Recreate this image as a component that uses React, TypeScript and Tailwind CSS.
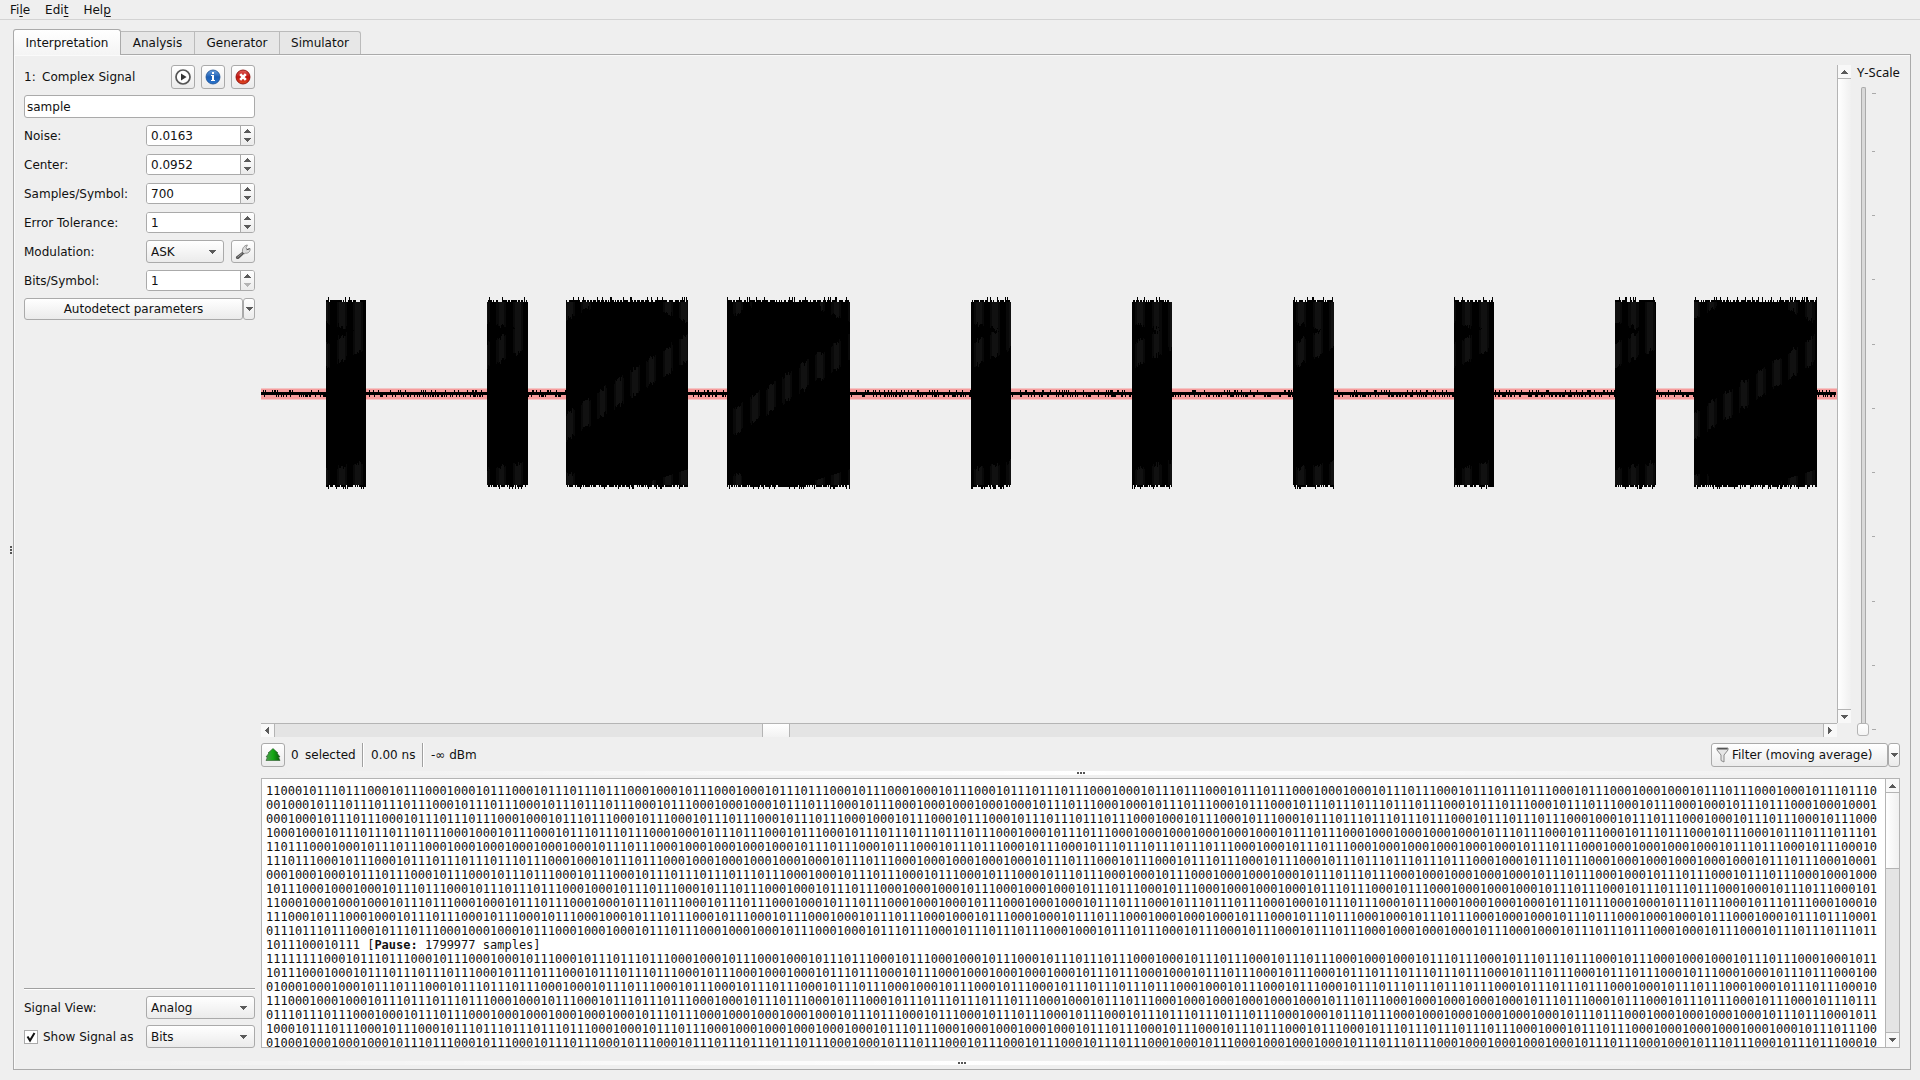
import React from "react";

/* ---------- demodulated data ---------- */

const SYMBOLS = [
  "0110100101110010011010010111001101100011011101000110011",
  "00111101101110100011010000011001101011111011011010011000",
  "0011011100110101101100101011110010101111101110011001101",
  "00011110010111001101011111001100000011000001101011010111",
  "11001100000011000001101011010111110011000000110000011010",
  "11010111110011000000110000011010110101111100110000001100",
  "0001101011010111110011010101100100001110000011001101100",
  "01000110111001101100110001000110100001101000011011100110",
  "10000110011001101100110001000110111001101000011001101100",
  "10100110101001101010011001001100001011001100011000100110",
  "1110110001000110001001101110011010101100001001110010111",
  "1101",
].join("");

const expand = (symbols: string) =>
  symbols
    .split("")
    .map((s) => (s === "1" ? "0111" : "0001"))
    .join("");

const MESSAGE = "11" + expand(SYMBOLS);

/* ---------- waveform ---------- */

const PLOT_W = 1576;
const PLOT_H = 658;
const MID = 328;

const BURSTS: [number, number][] = [
  [65, 105],
  [226, 267],
  [305, 427],
  [466, 589],
  [710, 750],
  [871, 911],
  [1032, 1073],
  [1193, 1233],
  [1354, 1395],
  [1433, 1556],
];

function makeRandom(seed: number) {
  let s = seed;
  return () => {
    s = (s * 1664525 + 1013904223) % 4294967296;
    return s / 4294967296;
  };
}

function buildWave() {
  const rnd = makeRandom(7);
  let noise = "";
  for (let x = 0; x < PLOT_W - 1; x += 1) {
    if (rnd() < 0.18) noise += `M${x} ${MID}v-3h1v3z`;
    if (rnd() < 0.34) noise += `M${x} ${MID}v4h1v-4z`;
  }
  let body = "";
  const sheen = ["", ""];
  for (const [a, b] of BURSTS) {
    const phase = rnd() * 6;
    let jitter = 0;
    for (let x = a; x < b; x += 1) {
      const up = rnd();
      const down = rnd();
      const top = MID - 93 - (up > 0.88 ? 3 : up > 0.3 ? 0 : -2);
      const bottom = MID + 94 + (down > 0.88 ? 2 : down > 0.3 ? 0 : -2);
      body += `M${x} ${top}h1V${bottom}h-1z`;
      const t = (x - a) / (b - a);
      const light = Math.sin(x / 2.6 + phase);
      if (light < -0.35) continue;
      const tone = light > 0.45 ? 1 : 0;
      jitter = Math.round(rnd() * 5);
      const bar = (y: number, h: number) => {
        sheen[tone] += `M${x} ${Math.round(y)}h1v${Math.round(h)}h-1z`;
      };
      if (b - a > 60) {
        bar(MID + 18 - t * 80 + jitter, 26);
        if (t < 0.2) bar(MID - 91, 14 - t * 60 + jitter);
        if (t > 0.75) bar(MID - 91, (t - 0.7) * 60 + jitter);
        if (t < 0.12) bar(MID + 84 - jitter, 8 + jitter);
        if (t > 0.7) bar(MID + 92 - (t - 0.6) * 40, (t - 0.6) * 40);
      } else {
        bar(MID - 52 - t * 20 + jitter, 24);
        bar(MID - 91, 18 + t * 10 + jitter);
        bar(MID + 74 - t * 8 + jitter, 18 + t * 8 - jitter);
      }
    }
  }
  return { noise, body, sheen };
}

const WAVE = buildWave();

function Waveform() {
  return (
    <svg
      className="block min-h-0 w-full flex-1"
      viewBox={`0 0 ${PLOT_W} ${PLOT_H}`}
      preserveAspectRatio="none"
      shapeRendering="crispEdges"
      role="img"
      aria-label="Signal waveform"
    >
      <rect x="0" y={MID - 5} width={PLOT_W} height="12" fill="#f3c4c4" />
      <rect x="0" y={MID - 4} width={PLOT_W} height="10" fill="#f69c9c" />
      <rect x="0" y={MID - 1} width={PLOT_W - 1} height="3" fill="#000" />
      <path d={WAVE.noise} fill="#000" />
      <path d={WAVE.body} fill="#000" />
      <path d={WAVE.sheen[0]} fill="#090909" />
      <path d={WAVE.sheen[1]} fill="#111" />
    </svg>
  );
}

/* ---------- small drawings ---------- */

type Dir = "up" | "down" | "left" | "right";

const ARROW_PATHS: Record<Dir, string> = {
  up: "M0 4h7v-1h-1v-1h-1v-1h-1v-1h-1v1h-1v1h-1v1h-1z",
  down: "M0 0h7v1h-1v1h-1v1h-1v1h-1v-1h-1v-1h-1v-1h-1z",
  left: "M4 0v7h-1v-1h-1v-1h-1v-1h-1v-1h1v-1h1v-1h1v-1z",
  right: "M0 0v7h1v-1h1v-1h1v-1h1v-1h-1v-1h-1v-1h-1v-1z",
};

function Arrow({ dir, faded = false }: { dir: Dir; faded?: boolean }) {
  const flat = dir === "up" || dir === "down";
  return (
    <svg
      width={flat ? 7 : 4}
      height={flat ? 4 : 7}
      viewBox={flat ? "0 0 7 4" : "0 0 4 7"}
      className="block shrink-0"
      aria-hidden="true"
    >
      <path d={ARROW_PATHS[dir]} fill={faded ? "#b4b4b4" : "#5a5a5a"} />
    </svg>
  );
}

function PlayIcon() {
  return (
    <svg width="16" height="16" viewBox="0 0 16 16" aria-hidden="true">
      <circle cx="8" cy="8" r="7" fill="#fff" stroke="#555" strokeWidth="1.7" />
      <path d="M6 4.6v6.8L11.600 8z" fill="#333" />
    </svg>
  );
}

function InfoIcon() {
  return (
    <svg width="16" height="16" viewBox="0 0 16 16" aria-hidden="true">
      <defs>
        <linearGradient id="infoFill" x1="0" y1="0" x2="0" y2="1">
          <stop offset="0" stopColor="#6ba0de" />
          <stop offset="0.5" stopColor="#1d5fb4" />
          <stop offset="1" stopColor="#2a74cc" />
        </linearGradient>
      </defs>
      <circle cx="8" cy="8" r="7" fill="url(#infoFill)" stroke="#1b4f93" strokeWidth="0.8" />
      <path d="M7 3h2v2H7zM6 6h3v5h1v1H6v-1h1V7H6z" fill="#fff" />
    </svg>
  );
}

function CloseIcon() {
  return (
    <svg width="16" height="16" viewBox="0 0 16 16" aria-hidden="true">
      <defs>
        <linearGradient id="closeFill" x1="0" y1="0" x2="0" y2="1">
          <stop offset="0" stopColor="#e0605a" />
          <stop offset="0.5" stopColor="#c01410" />
          <stop offset="1" stopColor="#e04a20" />
        </linearGradient>
      </defs>
      <circle cx="8" cy="8" r="7" fill="url(#closeFill)" stroke="#8f0e0a" strokeWidth="0.9" />
      <path d="M5.200 5.200l5.600 5.600M10.800 5.200l-5.600 5.600" stroke="#fff" strokeWidth="2.6" />
    </svg>
  );
}

function WrenchIcon() {
  return (
    <svg width="16" height="16" viewBox="0 0 16 16" aria-hidden="true">
      <path
        d="M7.600 8.600C6.800 5 8.600 1.600 12.400 1L11 3.800l1 1.600L15 4.400c.6 2.800-1.600 5.200-4.600 4.800L9 10z"
        fill="#dcdcdc"
        stroke="#8a8a8a"
        strokeWidth="0.9"
      />
      <path d="M11.600 5.800l3-1" stroke="#555" strokeWidth="1" />
      <path d="M1.200 12.600L7.400 7.800l1.800 2-5.400 5c-1.600 1-3.800-.8-2.600-2.200z" fill="#555" />
      <path d="M2.400 13.400l5-4.200" stroke="#aaa" strokeWidth="0.8" />
    </svg>
  );
}

function TreeIcon() {
  return (
    <svg width="16" height="16" viewBox="0 0 16 16" aria-hidden="true">
      <defs>
        <linearGradient id="treeFill" x1="0" y1="0" x2="1" y2="0">
          <stop offset="0" stopColor="#4f9a4f" />
          <stop offset="0.5" stopColor="#12a812" />
          <stop offset="1" stopColor="#0a5c0a" />
        </linearGradient>
      </defs>
      <path
        d="M8 1.500l5 4.500h-1l3 4h-1.500l1.500 3.500H1L2.500 10H1l3-4H3z"
        fill="url(#treeFill)"
        stroke="#2a5a2a"
        strokeWidth="0.6"
      />
    </svg>
  );
}

function FunnelIcon() {
  return (
    <svg width="13" height="16" viewBox="0 0 13 16" aria-hidden="true">
      <path d="M1 1h11v2L8 8v7l-3-1.500V8L1 3z" fill="#e6e6e6" stroke="#8a8a8a" strokeWidth="1" />
      <path d="M1.500 1h10v1.500h-10z" fill="#555" />
    </svg>
  );
}

function Dots({ vertical = false }: { vertical?: boolean }) {
  return (
    <span className={vertical ? "flex flex-col gap-px" : "flex gap-px"} aria-hidden="true">
      <span className="size-[2px] bg-[#555]" />
      <span className="size-[2px] bg-[#555]" />
      <span className="size-[2px] bg-[#555]" />
    </span>
  );
}

function SplitHandle() {
  return (
    <div className="flex h-1 w-full items-center justify-center bg-linear-to-r from-transparent via-white to-transparent">
      <Dots />
    </div>
  );
}

/* ---------- controls ---------- */

const FACE = "rounded-[3px] border border-[#aaa] bg-linear-to-b from-white to-[#ebebeb]";

function IconButton({ label, children }: { label: string; children: React.ReactNode }) {
  return (
    <button
      type="button"
      aria-label={label}
      className={`${FACE} flex h-full w-6 shrink-0 items-center justify-center`}
    >
      {children}
    </button>
  );
}

function Spin({ id, label, value, atMin = false }: { id: string; label: string; value: string; atMin?: boolean }) {
  return (
    <div className="flex h-[23px] items-center">
      <label htmlFor={id} className="w-[122px] shrink-0">
        {label}
      </label>
      <div className="flex h-[21px] min-w-0 flex-1 overflow-hidden rounded-[3px] border border-[#aaa] bg-white">
        <input id={id} defaultValue={value} className="min-w-0 flex-1 bg-white pl-1 outline-none" />
        <div className="flex w-[14px] shrink-0 flex-col border-l border-[#aaa] bg-linear-to-b from-white to-[#ebebeb]">
          <button type="button" aria-label={`Increase ${label}`} className="flex flex-1 items-center justify-center">
            <Arrow dir="up" />
          </button>
          <button type="button" aria-label={`Decrease ${label}`} className="flex flex-1 items-center justify-center">
            <Arrow dir="down" faded={atMin} />
          </button>
        </div>
      </div>
    </div>
  );
}

function Select({ id, value, options, label }: { id: string; value: string; options: string[]; label?: string }) {
  return (
    <div className="relative h-[23px] min-w-0 flex-1">
      <select
        id={id}
        aria-label={label}
        defaultValue={value}
        className={`${FACE} h-full w-full appearance-none pl-1 outline-none`}
      >
        {options.map((o) => (
          <option key={o}>{o}</option>
        ))}
      </select>
      <span className="pointer-events-none absolute inset-y-0 right-2 flex items-center">
        <Arrow dir="down" />
      </span>
    </div>
  );
}

function Mnemonic({ before, mark, after }: { before: string; mark: string; after: string }) {
  return (
    <button type="button" className="whitespace-pre">
      {before}
      <span className="underline underline-offset-2">{mark}</span>
      {after}
    </button>
  );
}

function Sidebar() {
  return (
    <aside className="flex w-[231px] shrink-0 flex-col gap-[6px]">
      <div className="flex h-6 items-center">
        <span className="w-[18px]">1:</span>
        <span className="flex-1">Complex Signal</span>
        <div className="flex h-full gap-[6px]">
          <IconButton label="Replay signal">
            <PlayIcon />
          </IconButton>
          <IconButton label="Signal details">
            <InfoIcon />
          </IconButton>
          <IconButton label="Close signal">
            <CloseIcon />
          </IconButton>
        </div>
      </div>
      <input
        aria-label="Signal name"
        defaultValue="sample"
        className="h-[23px] w-full rounded-[3px] border border-[#aaa] bg-white px-[2px] outline-none"
      />
      <Spin id="noise" label="Noise:" value="0.0163" />
      <Spin id="center" label="Center:" value="0.0952" />
      <Spin id="samples" label="Samples/Symbol:" value="700" />
      <Spin id="tolerance" label="Error Tolerance:" value="1" />
      <div className="flex h-[23px] items-center">
        <label htmlFor="modulation" className="w-[122px] shrink-0">
          Modulation:
        </label>
        <Select id="modulation" value="ASK" options={["ASK", "FSK", "PSK"]} />
        <span className="w-[7px]" />
        <IconButton label="Modulation settings">
          <WrenchIcon />
        </IconButton>
      </div>
      <Spin id="bits" label="Bits/Symbol:" value="1" atMin />
      <div className="flex h-[22px]">
        <button type="button" className={`${FACE} flex-1`}>
          Autodetect parameters
        </button>
        <button
          type="button"
          aria-label="Autodetect options"
          className={`${FACE} flex w-3 items-center justify-center`}
        >
          <Arrow dir="down" />
        </button>
      </div>
      <div className="flex-1" />
      <hr className="h-[2px] border-t border-b border-t-[#a0a0a0] border-b-white" />
      <div className="flex h-[23px] items-center">
        <label htmlFor="view" className="w-[122px] shrink-0">
          Signal View:
        </label>
        <Select id="view" value="Analog" options={["Analog", "Demodulated", "Spectrogram"]} />
      </div>
      <div className="flex h-[23px] items-center">
        <label className="flex w-[122px] shrink-0 items-center gap-[5px]">
          <span className="relative flex size-[14px]">
            <input
              type="checkbox"
              defaultChecked
              className="size-[14px] appearance-none border border-[#aaa] bg-white"
            />
            <svg
              width="14"
              height="14"
              viewBox="0 0 14 14"
              className="pointer-events-none absolute inset-0"
              aria-hidden="true"
            >
              <path d="M3.500 6.500L6 10.500L10.500 3" fill="none" stroke="#111" strokeWidth="2" />
            </svg>
          </span>
          Show Signal as
        </label>
        <Select id="show" label="Show signal as" value="Bits" options={["Bits", "Hex", "ASCII"]} />
      </div>
    </aside>
  );
}

function YScale() {
  return (
    <div className="mb-px flex w-[43px] shrink-0 flex-col">
      <label htmlFor="yscale" className="h-[14px] font-['Noto_Sans'] text-[13px] leading-[14px] whitespace-nowrap">
        Y-Scale
      </label>
      <div className="relative mt-2 flex flex-1">
        <input id="yscale" type="range" min="1" max="100" defaultValue="1" className="absolute inset-0 w-full opacity-0" />
        <div className="pointer-events-none flex w-3 flex-col items-center">
          <div className="w-[5px] flex-1 rounded-t-[2px] border border-b-0 border-[#aaa] bg-[#d9d9d9]" />
          <div className="h-[13px] w-3 rounded-[3px] border border-[#b4b4b4] bg-linear-to-b from-white to-[#f4f4f4]" />
        </div>
        <div className="pointer-events-none ml-[3px] flex flex-col pt-[6px] pb-[6px]">
          <div className="h-px w-1 bg-[#aaa]" />
          <div className="h-[57px]" />
          <div className="flex flex-1 flex-col justify-between">
            {Array.from({ length: 10 }, (_, i) => (
              <div key={i} className={i === 9 ? "h-px w-1 bg-[#aaa]" : "h-px w-[3px] bg-[#aaa]"} />
            ))}
          </div>
        </div>
      </div>
    </div>
  );
}

function ScrollButton({ dir, className }: { dir: Dir; className: string }) {
  return (
    <button
      type="button"
      aria-label={`Scroll ${dir}`}
      className={`flex shrink-0 items-center justify-center border-[#b4b4b4] bg-[#f8f8f8] ${className}`}
    >
      <Arrow dir={dir} />
    </button>
  );
}

function GraphPanel() {
  return (
    <div className="flex min-h-0 flex-1 gap-[6px]">
      <div className="flex min-w-0 flex-1">
        <div className="flex min-w-0 flex-1 flex-col">
          <Waveform />
          <div className="flex h-[14px] shrink-0 border-t border-[#b4b4b4] bg-[#e4e4e4]">
            <ScrollButton dir="left" className="w-[14px] border-r pr-px" />
            <div className="w-[487px]" />
            <div className="w-7 border-x border-[#b4b4b4] bg-linear-to-b from-white to-[#f2f2f2]" />
            <div className="flex-1" />
            <ScrollButton dir="right" className="w-[14px] border-l pr-px" />
          </div>
        </div>
        <div className="mb-[14px] flex w-[14px] shrink-0 flex-col border-l border-[#b4b4b4] bg-linear-to-r from-white to-[#f0f0f0]">
          <ScrollButton dir="up" className="h-[14px] border-b" />
          <div className="flex-1" />
          <ScrollButton dir="down" className="h-[14px] border-t" />
        </div>
      </div>
      <YScale />
    </div>
  );
}

function Divider() {
  return <span className="h-full w-[2px] border-r border-l border-r-white border-l-[#a0a0a0]" />;
}

function InfoBar() {
  return (
    <div className="mt-[6px] flex h-6 shrink-0 items-center whitespace-pre">
      <IconButton label="Collapse controls">
        <TreeIcon />
      </IconButton>
      <span className="ml-[6px] w-[14px]">0</span>
      <span className="w-[57px]">selected</span>
      <Divider />
      <span className="ml-[7px] w-[51px]">0.00 ns</span>
      <Divider />
      <span className="ml-[7px]">-∞ dBm</span>
      <span className="flex-1" />
      <button type="button" className={`${FACE} flex h-full w-[177px] items-center gap-[3px] pl-1`}>
        <FunnelIcon />
        Filter (moving average)
      </button>
      <button
        type="button"
        aria-label="Filter options"
        className={`${FACE} flex h-full w-3 items-center justify-center`}
      >
        <Arrow dir="down" />
      </button>
    </div>
  );
}

function BitView() {
  return (
    <div className="flex h-[270px] shrink-0 border border-[#b4b4b4] bg-white">
      <div
        role="textbox"
        aria-multiline="true"
        aria-readonly="true"
        aria-label="Demodulated bits"
        className="min-w-0 flex-1 overflow-hidden px-1 pt-[5px] font-['DejaVu_Sans_Mono',monospace] text-[12px] leading-[14px] break-all"
      >
        <p>
          {MESSAGE} [<b>Pause:</b> 1799977 samples]
        </p>
        <p>{"111111" + MESSAGE}</p>
      </div>
      <div className="flex w-[14px] shrink-0 flex-col border-l border-[#b4b4b4] bg-[#e4e4e4]">
        <ScrollButton dir="up" className="h-[14px] border-b" />
        <div className="h-[76px] border-b border-[#b4b4b4] bg-linear-to-r from-white to-[#f0f0f0]" />
        <div className="flex-1" />
        <ScrollButton dir="down" className="h-[15px] border-t" />
      </div>
    </div>
  );
}

export default function App() {
  return (
    <div className="flex h-screen flex-col bg-[#efefef] font-['DejaVu_Sans',sans-serif] text-[12px] leading-[14px] text-[#111]">
      <nav className="flex h-5 shrink-0 items-center gap-[15px] border-b border-[#d3d3d3] pl-[10px]">
        <Mnemonic before="Fi" mark="l" after="e" />
        <Mnemonic before="Edi" mark="t" after="" />
        <Mnemonic before="Hel" mark="p" after="" />
      </nav>
      <div className="flex min-h-0 flex-1">
        <div className="flex w-[13px] shrink-0 items-center justify-end pr-px">
          <Dots vertical />
        </div>
        <div className="flex min-w-0 flex-1 flex-col pt-[9px] pr-[9px] pb-[10px]">
          <div role="tablist" className="z-10 -mb-px flex items-end">
            <button
              type="button"
              role="tab"
              aria-selected="true"
              className="h-[26px] w-[108px] rounded-t-[3px] border border-b-0 border-[#aaa] bg-linear-to-b from-white to-[#f4f4f4]"
            >
              Interpretation
            </button>
            {[
              ["Analysis", "w-[74px]"],
              ["Generator", "w-[85px]"],
              ["Simulator", "w-[81px] rounded-tr-[3px]"],
            ].map(([name, cls]) => (
              <button
                key={name}
                type="button"
                role="tab"
                aria-selected="false"
                className={`mb-px h-[23px] border-t border-r border-[#bbb] bg-[#e7e7e7] ${cls}`}
              >
                {name}
              </button>
            ))}
          </div>
          <main className="flex min-h-0 flex-1 flex-col border border-[#aaa] px-[10px] pt-[10px] shadow-[inset_1px_1px_0_#fafafa]">
            <div className="flex min-h-0 flex-1 gap-[6px]">
              <Sidebar />
              <section className="flex min-w-0 flex-1 flex-col">
                <GraphPanel />
                <InfoBar />
                <div className="flex h-[11px] shrink-0 items-center">
                  <SplitHandle />
                </div>
                <BitView />
              </section>
            </div>
            <div className="flex h-[21px] shrink-0 items-center pt-[9px]">
              <SplitHandle />
            </div>
          </main>
        </div>
      </div>
    </div>
  );
}
